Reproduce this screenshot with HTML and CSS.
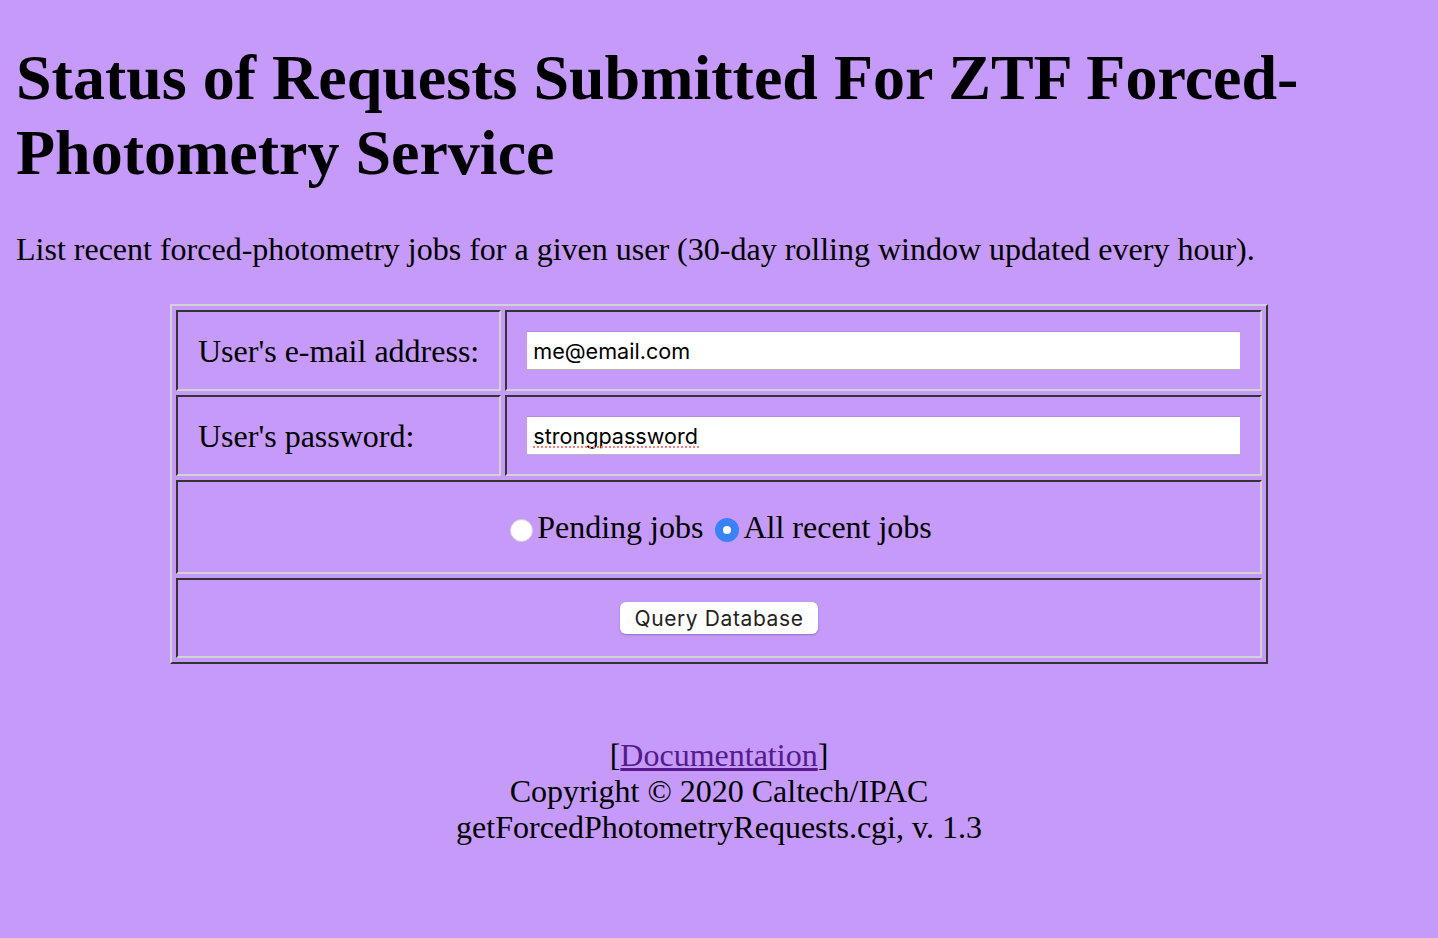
FILE: index.html
```html
<!DOCTYPE html>
<html>
<head>
<meta charset="utf-8">
<title>ZTF Forced-Photometry Requests</title>
<link rel="stylesheet" href="styles.css">
</head>
<body>
<h1 class="title">Status of Requests Submitted For ZTF Forced-Photometry Service</h1>
<p class="intro">List recent forced-photometry jobs for a given user (30-day rolling window updated every hour).</p>
<form class="query-form">
<table class="query-table">
<tr class="field-row">
<td class="label-cell">User's e-mail address:</td>
<td class="input-cell"><input class="text-input" type="text" value="me@email.com"></td>
</tr>
<tr class="field-row">
<td class="label-cell">User's password:</td>
<td class="input-cell"><span class="spell-wrap"><input class="text-input" type="text" value="strongpassword"></span></td>
</tr>
<tr>
<td class="choice-cell" colspan="2"><label class="choice"><input class="radio" type="radio" name="jobs">Pending jobs</label> <label class="choice"><input class="radio" type="radio" name="jobs" checked>All recent jobs</label></td>
</tr>
<tr>
<td class="submit-cell" colspan="2"><button class="submit-btn" type="button">Query Database</button></td>
</tr>
</table>
</form>
<div class="footer">
[<a class="doc-link" href="#">Documentation</a>]<br>
Copyright © 2020 Caltech/IPAC<br>
getForcedPhotometryRequests.cgi, v. 1.3
</div>
</body>
</html>
```
FILE: styles.css
```css
html {
  background: #c59af9;
}
body {
  margin: 16px;
  font-family: "Liberation Serif", "Times New Roman", serif;
  font-size: 32px;
  line-height: 36px;
  color: #000;
  background: #c59af9;
}
.title {
  font-size: 64px;
  line-height: 75px;
  font-weight: bold;
  margin: 24px 0 41px;
}
.intro {
  margin: 0 0 37px;
}
.query-form {
  margin: 0;
}
.query-table {
  margin: 0 auto;
  width: 1098px;
  border-collapse: separate;
  border-spacing: 4px;
  border-style: solid;
  border-width: 2px;
  border-color: #d2d2d2 #333 #333 #d2d2d2;
}
.query-table td {
  border-style: solid;
  border-width: 2px;
  border-color: #333 #d2d2d2 #d2d2d2 #333;
  vertical-align: middle;
}
.label-cell {
  width: 1%;
  white-space: nowrap;
  padding: 19px 20px;
}
.input-cell {
  padding: 19px 20px;
}
.spell-wrap {
  position: relative;
  display: block;
}
.spell-wrap::after {
  content: "";
  position: absolute;
  left: 6px;
  bottom: 7px;
  width: 166px;
  height: 0;
  border-bottom: 2px dotted #f08080;
}
.text-input {
  display: block;
  box-sizing: border-box;
  width: 100%;
  height: 39px;
  margin: 0;
  padding: 0 6px;
  background: #fff;
  border: none;
  border-top: 1px solid #b58ae3;
  border-bottom: 1px solid #b9b3c2;
  font-family: "Inter", "Liberation Sans", sans-serif;
  font-size: 21.6px;
  color: #000;
  outline: none;
}
.choice-cell {
  text-align: center;
  padding: 27px 20px;
}
.choice {
  white-space: nowrap;
}
.radio {
  appearance: none;
  -webkit-appearance: none;
  width: 23px;
  height: 23px;
  margin: 0 4px 0 4px;
  border-radius: 50%;
  background: #fff;
  border: 1px solid #d4d0d8;
  vertical-align: -4px;
  box-sizing: border-box;
}
.radio:checked {
  width: 24px;
  height: 24px;
  border: 8px solid #3a82f7;
  background: #fff;
}
.submit-cell {
  text-align: center;
  padding: 22px 20px;
  line-height: 32px;
}
.submit-btn {
  display: inline-block;
  height: 32px;
  padding: 0 15px;
  background: #fff;
  border: none;
  border-radius: 6px;
  box-shadow: 0 1px 2px rgba(0, 0, 0, 0.25);
  font-family: "Inter", "Liberation Sans", sans-serif;
  font-size: 21px;
  letter-spacing: 0.6px;
  color: #222;
  vertical-align: top;
}
.footer {
  text-align: center;
  margin-top: 73px;
}
.doc-link {
  color: #551a8b;
}
```
